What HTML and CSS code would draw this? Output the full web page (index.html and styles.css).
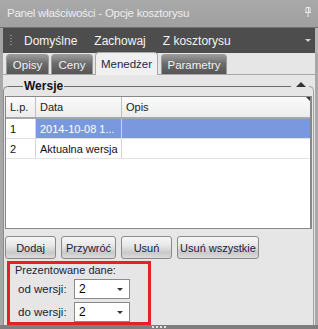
FILE: index.html
```html
<!DOCTYPE html>
<html>
<head>
<meta charset="utf-8">
<link rel="stylesheet" href="styles.css">
</head>
<body>
<div class="window">
  <div class="titlebar">
    <span class="title">Panel właściwości - Opcje kosztorysu</span>
    <svg class="pin" width="8" height="10" viewBox="0 0 8 10"><path d="M2 0.5H6V5.5H2Z M1 5.5H7 M4 5.5V10" fill="none" stroke="#e8e8e8" stroke-width="1"/><path d="M4.5 1V5" stroke="#e8e8e8" stroke-width="1"/></svg>
  </div>
  <div class="frame">
    <div class="toolbar">
      <span class="grip"></span>
      <span class="tb-item">Domyślne</span>
      <span class="tb-item">Zachowaj</span>
      <span class="tb-item">Z kosztorysu</span>
      <span class="tb-spacer"></span>
      <span class="tb-arrow"></span>
    </div>
    <div class="tabs">
      <div class="tab t-opisy">Opisy</div>
      <div class="tab t-ceny">Ceny</div>
      <div class="tab active t-men">Menedżer</div>
      <div class="tab t-par">Parametry</div>
    </div>
    <div class="panel">
      <div class="group-head">
        <span class="corner-l"></span>
        <span class="line short"></span>
        <span class="legend">Wersje</span>
        <span class="line long"></span>
        <span class="collapse"></span>
        <span class="corner-r"></span>
      </div>
      <div class="group-body">
        <div class="table">
          <div class="row head">
            <div class="cell c1">L.p.</div>
            <div class="cell c2">Data</div>
            <div class="cell c3">Opis<span class="sortmark"></span></div>
          </div>
          <div class="row sel">
            <div class="cell c1">1</div>
            <div class="cell c2">2014-10-08 1...</div>
            <div class="cell c3"></div>
          </div>
          <div class="row">
            <div class="cell c1">2</div>
            <div class="cell c2">Aktualna wersja</div>
            <div class="cell c3"></div>
          </div>
        </div>
        <div class="buttons">
          <button class="btn b-dodaj">Dodaj</button>
          <button class="btn b-przy">Przywróć</button>
          <button class="btn b-usun">Usuń</button>
          <button class="btn b-all">Usuń wszystkie</button>
        </div>
        <div class="redbox">
          <div class="rb-title">Prezentowane dane:</div>
          <div class="rb-row">
            <span class="rb-label">od wersji:</span>
            <div class="combo"><span>2</span><span class="combo-arrow"></span></div>
          </div>
          <div class="rb-row">
            <span class="rb-label">do wersji:</span>
            <div class="combo"><span>2</span><span class="combo-arrow"></span></div>
          </div>
        </div>
      </div>
    </div>
  </div>
  <div class="statusbar"><span class="dots"><i></i><i></i><i></i><i></i></span></div>
</div>
</body>
</html>
```
FILE: styles.css
```css
* { box-sizing: border-box; }
html, body { margin: 0; padding: 0; }
body {
  width: 318px;
  height: 329px;
  overflow: hidden;
  font-family: "Liberation Sans", Arial, sans-serif;
  font-size: 11px;
  background: #7e7e7e;
}
.window {
  width: 318px;
  height: 329px;
  display: flex;
  flex-direction: column;
  background: #7e7e7e;
}
.titlebar {
  height: 28px;
  flex: none;
  display: flex;
  align-items: center;
  justify-content: space-between;
  padding: 0 6px 0 7px;
  background: linear-gradient(#a9a9a9, #a0a0a0);
  border-bottom: 1px solid #707070;
  color: #ececec;
  font-size: 11.5px;
  letter-spacing: -0.25px;
}
.title { position: relative; top: -1px; }
.pin { margin-top: -3px; }
.frame {
  flex: 1;
  display: flex;
  flex-direction: column;
  padding: 0 3px 0 3px;
  background: #a8a8a8;
}
.toolbar {
  height: 25px;
  flex: none;
  display: flex;
  align-items: center;
  background: #4d4d4d;
  color: #f4f4f4;
  font-size: 12px;
  margin: 0 -3px 0 -3px;
  padding-left: 7px;
  padding-right: 7px;
  border-left: 3px solid #a4a4a4;
  border-right: 3px solid #b4b4b4;
}
.grip {
  width: 2px;
  height: 11px;
  margin-right: 12px;
  background: repeating-linear-gradient(#888 0 1px, transparent 1px 3px);
}
.tb-item { margin-right: 17px; }
.tb-spacer { flex: 1; }
.tb-arrow {
  width: 0; height: 0;
  border-left: 3px solid transparent;
  border-right: 3px solid transparent;
  border-top: 3px solid #cfcfcf;
  margin-right: -3px;
}
.tabs {
  height: 22px;
  flex: none;
  display: flex;
  align-items: flex-end;
  gap: 2px;
  padding-left: 3px;
  background: #e6e6e6;
  border-bottom: 1px solid #a8a8a8;
}
.tab {
  height: 20px;
  display: flex;
  align-items: center;
  justify-content: center;
  border: 1px solid #9a9a9a;
  border-bottom: none;
  border-radius: 4px 4px 0 0;
  background: linear-gradient(#9a9a9a, #6c6c6c 45%, #555 100%);
  color: #f2f2f2;
  font-size: 11.5px;
}
.tab.active {
  background: #f0f0f0;
  color: #1c2848;
  border-color: #a8a8a8;
  margin-bottom: -1px;
  height: 23px;
}
.t-opisy { width: 43px; }
.t-ceny { width: 42px; }
.t-men { width: 63px; }
.t-par { width: 66px; margin-left: 1px; }
.panel {
  flex: 1;
  background: #e6e6e6;
  padding: 3px 1px 0 0;
  display: flex;
  flex-direction: column;
}
.group-head {
  height: 16px;
  flex: none;
  display: flex;
  align-items: flex-start;
}
.corner-l {
  width: 5px;
  height: 8px;
  margin-top: 8px;
  border-top: 1px solid #8c8c8c;
  border-left: 1px solid #8c8c8c;
  border-top-left-radius: 5px;
}
.corner-r {
  width: 5px;
  height: 8px;
  margin-top: 8px;
  border-top: 1px solid #a0a0a0;
  border-right: 1px solid #a0a0a0;
  border-top-right-radius: 5px;
}
.line { height: 1px; background: #6e6e6e; margin-top: 8px; }
.line.short { width: 15px; }
.line.long { flex: 1; }
.legend {
  font-weight: bold;
  font-size: 12px;
  line-height: 16px;
  color: #111;
  padding: 0 1px;
  margin-top: 0px;
}
.collapse {
  width: 0; height: 0;
  border-left: 5px solid transparent;
  border-right: 5px solid transparent;
  border-bottom: 5px solid #333;
  margin: 4px 3px 0 5px;
}
.group-body {
  flex: 1;
  padding: 2px 1px 0 1px;
  display: flex;
  flex-direction: column;
  border-left: 1px solid #8c8c8c;
  border-right: 1px solid #a0a0a0;
}
.table {
  height: 133px;
  flex: none;
  background: #fff;
  border: 1px solid #888;
  border-right: 2px solid #888;
  display: flex;
  flex-direction: column;
}
.row {
  display: flex;
  height: 20px;
  border-bottom: 1px solid #e2e2e2;
}
.row.head {
  height: 22px;
  background: linear-gradient(#fbfbfb, #ececec);
  border-bottom: 2px solid #a8a8a8;
  position: relative;
}
.cell {
  display: flex;
  align-items: center;
  padding-left: 4px;
  border-right: 1px solid #d4d4d4;
  color: #111;
  white-space: nowrap;
  overflow: hidden;
}
.head .cell { border-right-color: #c0c0c0; color: #222; }
.c1 { width: 30px; }
.c2 { width: 86px; }
.c3 { flex: 1; border-right: none; }
.sel .c2, .sel .c3 { background: #7a98de; color: #fff; }
.sortmark {
  position: absolute;
  right: 0; top: 0;
  width: 0; height: 0;
  border-left: 4px solid transparent;
  border-top: 4px solid #333;
}
.buttons {
  display: flex;
  gap: 5px;
  margin-top: 7px;
  height: 23px;
  flex: none;
}
.btn {
  height: 23px;
  padding: 0;
  font-family: "Liberation Sans", Arial, sans-serif;
  font-size: 11px;
  color: #1a2040;
  border: 1px solid #8a8a8a;
  border-radius: 3px;
  background: linear-gradient(#f6f6f6, #e8e8e8 40%, #c9c9c9 75%, #dcdcdc);
}
.b-dodaj { width: 51px; }
.b-przy { width: 55px; }
.b-usun { width: 51px; }
.b-all { width: 82px; }
.redbox {
  margin-top: 2px;
  margin-left: 2px;
  width: 144px;
  height: 64px;
  flex: none;
  border: 3px solid #e3212b;
  padding: 0 0 0 5px;
  display: flex;
  flex-direction: column;
  color: #1a2040;
}
.rb-title { height: 12px; line-height: 12px; }
.rb-row {
  display: flex;
  align-items: center;
  margin-top: 3px;
  height: 20px;
}
.rb-label { width: 59px; padding-left: 3px; font-size: 11.5px; }
.combo {
  width: 56px;
  height: 20px;
  background: #fff;
  border: 1px solid #8a8a8a;
  display: flex;
  align-items: center;
  justify-content: space-between;
  padding: 0 6px 0 4px;
  color: #000;
  font-size: 12px;
}
.combo-arrow {
  width: 0; height: 0;
  border-left: 3px solid transparent;
  border-right: 3px solid transparent;
  border-top: 3px solid #333;
}
.statusbar {
  height: 4px;
  flex: none;
  background: #7e7e7e;
  display: flex;
  justify-content: center;
}
.dots { display: flex; gap: 2px; padding-top: 1px; }
.dots i { display: block; width: 2px; height: 2px; background: #e0e0e0; }
```
